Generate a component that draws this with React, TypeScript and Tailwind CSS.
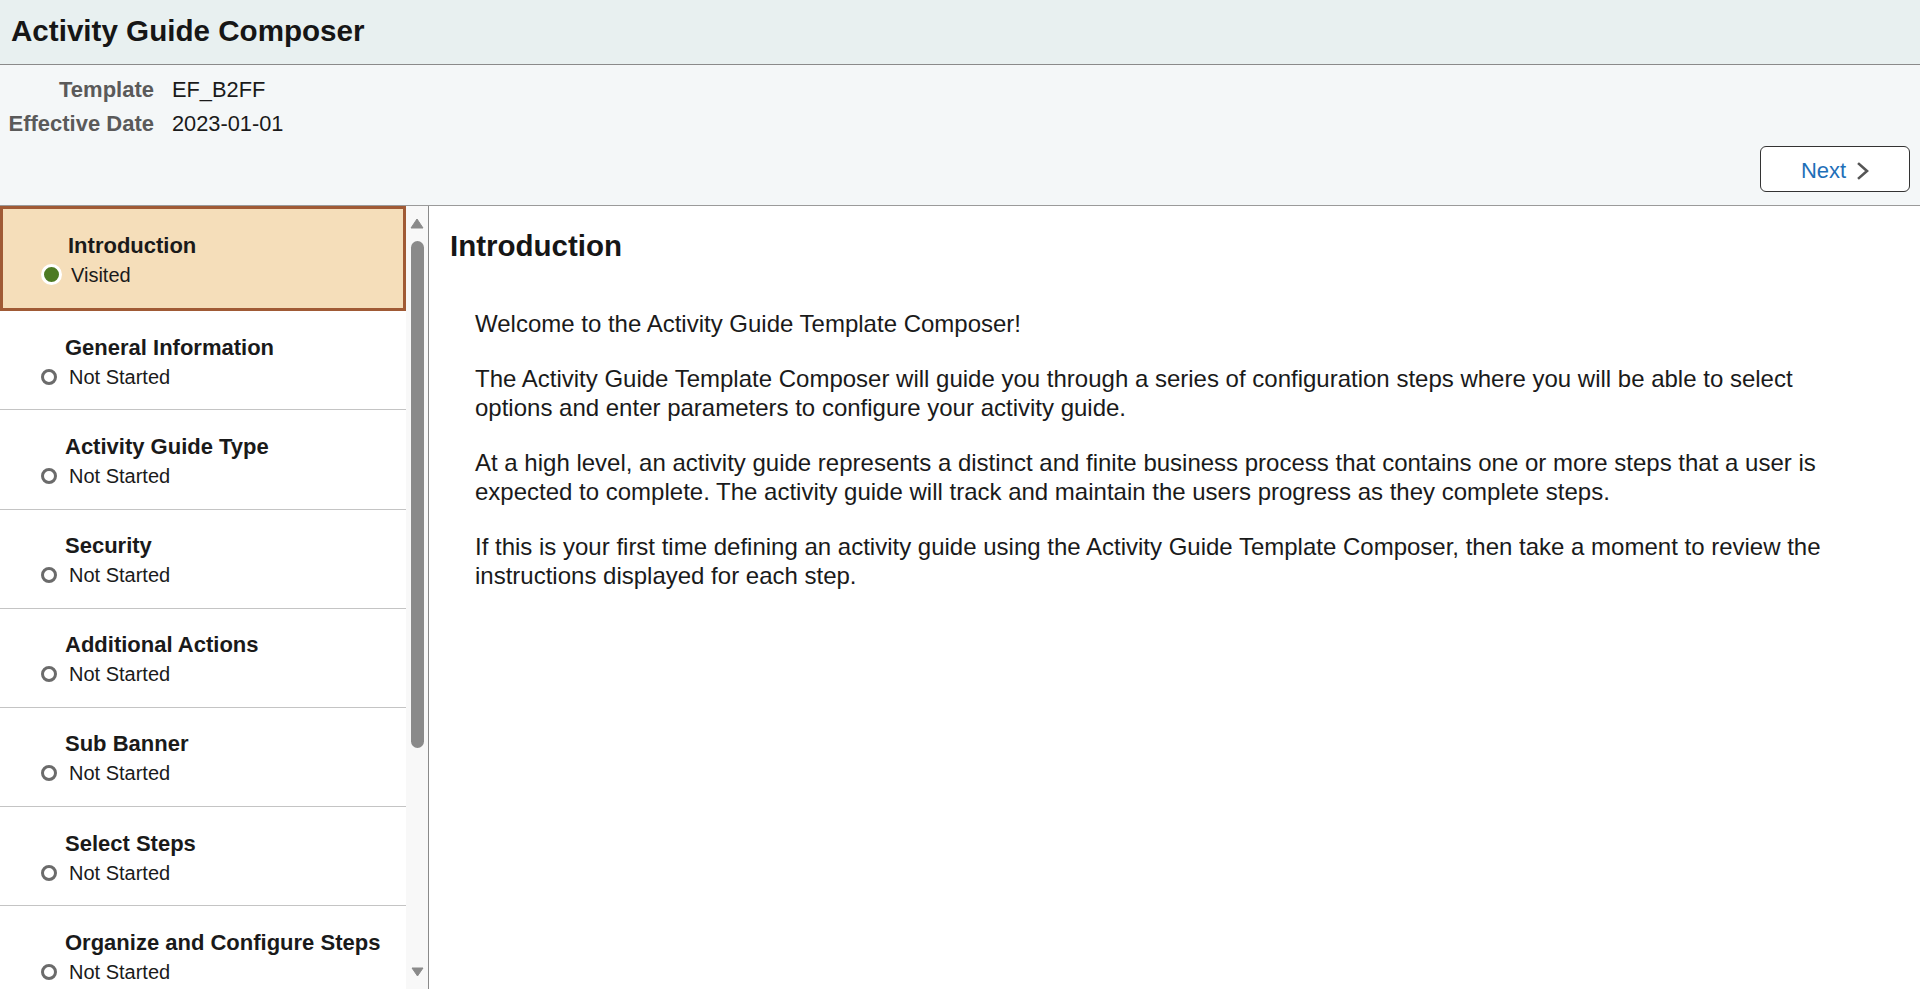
import React from "react";

const steps = [
  { title: "General Information" },
  { title: "Activity Guide Type" },
  { title: "Security" },
  { title: "Additional Actions" },
  { title: "Sub Banner" },
  { title: "Select Steps" },
  { title: "Organize and Configure Steps" },
];

function StepItem({ title }: { title: string }) {
  return (
    <div className="h-[99.2px] shrink-0 border-b border-[#c4c4c4] pl-[41px] pt-[22.5px]">
      <div className="pl-[24px] text-[22px] font-bold leading-[28px] text-[#1a1a1a]">{title}</div>
      <div className="flex items-center pt-[1px] text-[20px] leading-[28px] text-[#1a1a1a]">
        <div className="flex w-[28px] items-center">
          <span className="block h-4 w-4 rounded-full border-[3px] border-[#6b6b6b]" />
        </div>
        <span>Not Started</span>
      </div>
    </div>
  );
}

export default function App() {
  return (
    <div
      className="flex h-screen w-full flex-col overflow-hidden bg-white text-[#1a1a1a]"
      style={{ fontFamily: '"Liberation Sans", Arial, sans-serif' }}
    >
      {/* Title bar */}
      <div className="h-[65px] shrink-0 border-b border-[#8a8a8a] bg-[#e8f0f0] pl-[11px] pt-[14px]">
        <h1 className="text-[29.6px] font-bold leading-[34px] text-[#161616]">Activity Guide Composer</h1>
      </div>

      {/* Sub header */}
      <div className="h-[141px] shrink-0 border-b border-[#9a9a9a] bg-[#f4f7f8] pt-[7.6px]">
        <div className="grid grid-cols-[154px_auto] gap-x-[18px] text-[22px] leading-[34.4px]">
          <div className="text-right font-bold text-[#5a5a5a]">Template</div>
          <div className="text-[21.8px] text-[#1a1a1a]">EF_B2FF</div>
          <div className="text-right font-bold text-[#5a5a5a]">Effective Date</div>
          <div className="text-[21.8px] text-[#1a1a1a]">2023-01-01</div>
        </div>
        <div className="mt-[4.6px] flex justify-end pr-[10px]">
          <button className="flex h-[46px] w-[150px] items-center justify-center gap-[11px] rounded-[6px] border border-[#333] bg-white pt-[3px] text-[22px] text-[#1e6fb8]">
            <span>Next</span>
            <svg width="12" height="18" viewBox="0 0 12 18" fill="none">
              <path d="M2 2 L10 9 L2 16" stroke="#555" strokeWidth="2.6" strokeLinecap="square" strokeLinejoin="miter" />
            </svg>
          </button>
        </div>
      </div>

      {/* Body */}
      <div className="flex min-h-0 flex-1">
        {/* Step list */}
        <div className="flex w-[406px] shrink-0 flex-col overflow-hidden">
          <div className="h-[105.2px] shrink-0 border-[3px] border-[#a05a35] bg-[#f5deba] pl-[38px] pt-[22.5px]">
            <div className="pl-[27px] text-[22px] font-bold leading-[28px] text-[#1a1a1a]">Introduction</div>
            <div className="flex items-center pt-[1px] text-[20px] leading-[28px] text-[#1a1a1a]">
              <div className="flex w-[30px] items-center">
                <span className="block h-[21px] w-[21px] rounded-full border-[3px] border-white bg-[#4d7a23]" />
              </div>
              <span>Visited</span>
            </div>
          </div>
          {steps.map((s) => (
            <StepItem key={s.title} title={s.title} />
          ))}
        </div>

        {/* Scrollbar */}
        <div className="flex w-[23px] shrink-0 flex-col items-center border-r border-[#8a8a8a] bg-[#f8f8f8] pb-[12px] pt-[12px]">
          <svg width="14" height="11" viewBox="0 0 14 11">
            <path d="M7 1 L13 10 L1 10 Z" fill="#8a8a8a" stroke="#8a8a8a" strokeWidth="1" strokeLinejoin="round" />
          </svg>
          <div className="mt-[12px] h-[507px] w-[13px] rounded-full bg-[#8a8a8a]" />
          <div className="flex-1" />
          <svg width="13" height="10" viewBox="0 0 13 10">
            <path d="M1 1 L12 1 L6.5 9 Z" fill="#8a8a8a" stroke="#8a8a8a" strokeWidth="1" strokeLinejoin="round" />
          </svg>
        </div>

        {/* Main content */}
        <div className="min-w-0 flex-1 pl-[21px] pt-[23.5px]">
          <h2 className="text-[29.5px] font-bold leading-[32px] text-[#161616]">Introduction</h2>
          <div className="mt-[48px] w-[1372px] pl-[25px] text-[24px] leading-[28.2px] text-[#1a1a1a]">
            <p>Welcome to the Activity Guide Template Composer!</p>
            <p className="mt-[27.6px]">
              The Activity Guide Template Composer will guide you through a series of configuration steps where you will be able to select options and enter parameters to configure your activity guide.
            </p>
            <p className="mt-[27.6px]">
              At a high level, an activity guide represents a distinct and finite business process that contains one or more steps that a user is expected to complete. The activity guide will track and maintain the users progress as they complete steps.
            </p>
            <p className="mt-[27.6px]">
              If this is your first time defining an activity guide using the Activity Guide Template Composer, then take a moment to review the instructions displayed for each step.
            </p>
          </div>
        </div>
      </div>
    </div>
  );
}
